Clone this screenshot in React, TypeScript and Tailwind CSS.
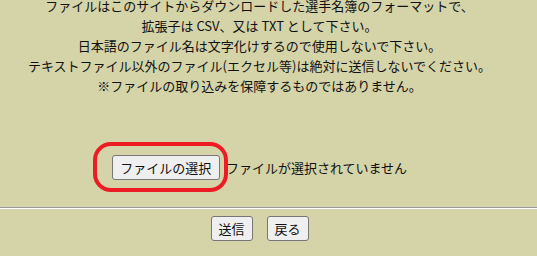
import React from "react";

export default function App() {
  const lines = [
    "ファイルはこのサイトからダウンロードした選手名簿のフォーマットで、",
    "拡張子は CSV、又は TXT として下さい。",
    "日本語のファイル名は文字化けするので使用しないで下さい。",
    "テキストファイル以外のファイル(エクセル等)は絶対に送信しないでください。",
    "※ファイルの取り込みを保障するものではありません。",
  ];
  return (
    <div className="h-[256px] overflow-hidden bg-[#d5d3a8] font-['Noto_Sans_CJK_JP','Noto_Sans',sans-serif] text-[13px] text-[#111]">
      <div className="-mt-[4px] flex flex-col items-center pr-[18px] text-center leading-[20px]">
        {lines.map((l) => (
          <p key={l} className="whitespace-nowrap">
            {l}
          </p>
        ))}
      </div>
      <div className="mt-[59px] flex h-[25px] items-center justify-center pr-[18px]">
        <div className="relative">
          <button className="flex h-[25px] w-[108px] items-center justify-center rounded-[3px] border border-[#767676] bg-[#efefef] leading-none text-[#111]">
            ファイルの選択
          </button>
          <span className="pointer-events-none absolute left-[-19px] top-[-13px] h-[50px] w-[135px] rounded-[18px] border-4 border-[#ed1c24]" />
        </div>
        <span className="ml-[6px] whitespace-nowrap leading-[20px]">ファイルが選択されていません</span>
      </div>
      <hr className="mt-[27px] border-0 border-t border-b border-t-[#999999] border-b-white" />
      <div className="mt-[7px] flex justify-center gap-[14px] pr-[18px]">
        <button className="flex h-[25px] w-[42px] items-center justify-center rounded-[3px] border border-[#767676] bg-[#efefef] leading-none text-[#111]">
          送信
        </button>
        <button className="flex h-[25px] w-[42px] items-center justify-center rounded-[3px] border border-[#767676] bg-[#efefef] leading-none text-[#111]">
          戻る
        </button>
      </div>
    </div>
  );
}
